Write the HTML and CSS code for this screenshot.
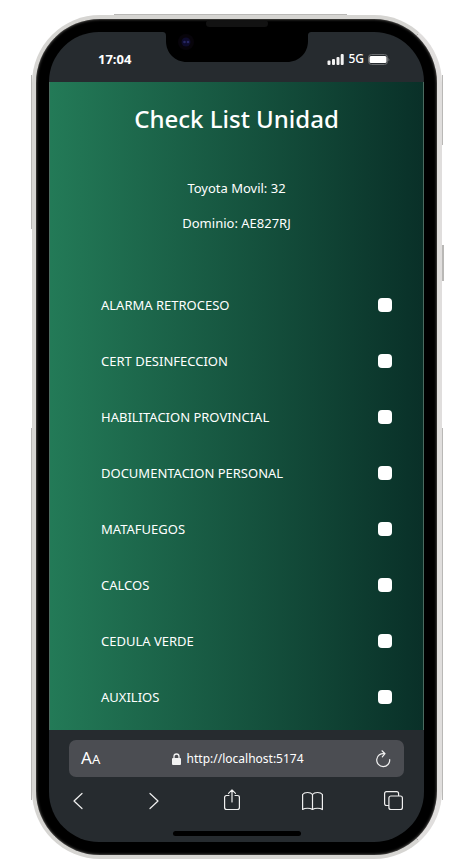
FILE: index.html
```html
<!DOCTYPE html>
<html lang="es">
<head>
<meta charset="utf-8">
<meta name="viewport" content="width=device-width, initial-scale=1">
<title>Check List Unidad</title>
<link rel="stylesheet" href="styles.css">
</head>
<body>
<div class="phone">
  <span class="edge edge-top"></span>
  <span class="edge edge-left-upper"></span>
  <span class="edge edge-left-lower"></span>
  <span class="edge edge-right-upper"></span>
  <span class="edge edge-power"></span>
  <span class="edge edge-right-lower"></span>
  <span class="speaker"></span>
  <div class="screen">
    <svg class="notch" width="150" height="30" viewBox="0 0 150 30" aria-hidden="true">
      <path d="M0 0C3 0 4 1 4 4V9C4 21 13 30 25 30H125C137 30 146 21 146 9V4C146 1 147 0 150 0Z" fill="#000"/>
      <circle cx="24" cy="10" r="8" fill="#07040a"/>
      <circle cx="24" cy="10" r="4.500" fill="#0d0b2c"/>
      <circle cx="22.500" cy="10" r="1.300" fill="#272763"/>
      <circle cx="26" cy="10" r="1.300" fill="#272763"/>
    </svg>
    <header class="status">
      <span class="time">17:04</span>
      <span class="signals">
        <svg width="17" height="11" viewBox="0 0 17 11" fill="#f2f2f2" aria-hidden="true">
          <rect x="0.500" y="6.500" width="3" height="4.500" rx="1"/><rect x="5" y="5" width="3" height="6" rx="1"/><rect x="9.500" y="3" width="3" height="8" rx="1"/><rect x="13.700" y="0" width="3" height="11" rx="1"/>
        </svg>
        <span class="network">5G</span>
        <svg width="22" height="11" viewBox="0 0 22 11" aria-hidden="true">
          <rect x=".5" y=".5" width="19" height="10" rx="3" fill="none" stroke="#6b6e71"/>
          <rect x="1.500" y="2" width="17" height="7" rx="1.500" fill="#fff"/>
          <path d="M20.500 3.500Q22 5.500 20.500 7.500Z" fill="#7b7e80"/>
        </svg>
      </span>
    </header>
    <main class="page">
      <h1 class="title">Check List Unidad</h1>
      <div class="unit">
        <p>Toyota Movil: 32</p>
        <p>Dominio: AE827RJ</p>
      </div>
      <form class="checks">
        <div class="check"><label for="c1">ALARMA RETROCESO</label><input type="checkbox" id="c1"></div>
        <div class="check"><label for="c2">CERT DESINFECCION</label><input type="checkbox" id="c2"></div>
        <div class="check"><label for="c3">HABILITACION PROVINCIAL</label><input type="checkbox" id="c3"></div>
        <div class="check"><label for="c4">DOCUMENTACION PERSONAL</label><input type="checkbox" id="c4"></div>
        <div class="check"><label for="c5">MATAFUEGOS</label><input type="checkbox" id="c5"></div>
        <div class="check"><label for="c6">CALCOS</label><input type="checkbox" id="c6"></div>
        <div class="check"><label for="c7">CEDULA VERDE</label><input type="checkbox" id="c7"></div>
        <div class="check"><label for="c8">AUXILIOS</label><input type="checkbox" id="c8"></div>
      </form>
    </main>
    <footer class="browser">
      <div class="address">
        <button class="text-size" type="button" aria-label="Tamaño de texto"><span class="big">A</span><span class="small">A</span></button>
        <a class="url" href="http://localhost:5174">
          <svg width="9" height="12" viewBox="0 0 9 12" aria-hidden="true"><rect x="0" y="5" width="9" height="7" rx="1" fill="#f2f2f2"/><path d="M2 6V3.500a2.500 2.500 0 0 1 5 0V6" fill="none" stroke="#f2f2f2" stroke-width="1.300"/></svg>
          <span>http://localhost:5174</span>
        </a>
        <button type="button" aria-label="Recargar">
          <svg class="line" width="16" height="18" viewBox="0 0 16 18"><path d="M9.500 3.700A6.500 6.500 0 1 0 14.700 9.500M7 .8l3 2.900L7.300 6.800"/></svg>
        </button>
      </div>
      <nav class="tools" aria-label="Navegador">
        <button type="button" aria-label="Atrás"><svg class="line" width="14" height="22" viewBox="0 0 14 22"><path d="M9 4.500L1 12l8 7.500"/></svg></button>
        <button type="button" aria-label="Adelante"><svg class="line" width="14" height="22" viewBox="0 0 14 22"><path d="M1 4.500L9 12l-8 7.500"/></svg></button>
        <button type="button" aria-label="Compartir"><svg class="line" width="16" height="22" viewBox="0 0 16 22"><path d="M5 6.500H2.500Q.6 6.500.6 8.500v10q0 2 2 2h10.800q2 0 2-2v-10q0-2-2-2H11M8 13V1M4.500 4.300L8 .8l3.500 3.500"/></svg></button>
        <button type="button" aria-label="Marcadores"><svg class="line" width="21" height="22" viewBox="0 0 21 22"><path d="M10.500 5.500C8.500 2.800 2.500 2.800.6 5.500V20.500C3 18.800 8 18.800 10.500 20.500 13 18.800 18 18.800 20.400 20.500V5.500C18.500 2.800 12.500 2.800 10.500 5.500V20.500"/></svg></button>
        <button type="button" aria-label="Pestañas"><svg class="line" width="19" height="22" viewBox="0 0 19 22"><rect x="4.900" y="7" width="13.500" height="13.500" rx="2"/><path d="M4.500 16.500H2.600Q.6 16.500.6 14.500V4.700Q.6 2.700 2.600 2.700h10q2 0 2 2V6.500"/></svg></button>
      </nav>
      <span class="home"></span>
    </footer>
  </div>
</div>
</body>
</html>
```
FILE: styles.css
```css
* { box-sizing: border-box; }

body {
  margin: 0;
  padding: 15px 18px 8px 32px;
  background: #fff;
  color: #fff;
  font: 14px/20px "Segoe UI", "Noto Sans", "Open Sans", sans-serif;
}

button {
  display: flex;
  align-items: center;
  padding: 0;
  border: 0;
  background: none;
  color: inherit;
  font: inherit;
}

.phone {
  position: relative;
  padding: 13px;
  border: 4px solid #d6d5d2;
  border-right: 5px solid #e0dedd;
  border-radius: 68px;
  background: #000;
  box-shadow: inset 0 0 3px #8a8884;
}

.edge { position: absolute; background: #b9b8b6; }
.edge-top { top: -5px; left: 78px; right: 90px; height: 1px; }
.edge-left-upper { left: -5px; top: 56px; width: 1px; height: 154px; }
.edge-left-lower { left: -5px; top: 409px; width: 1px; height: 372px; }
.edge-right-upper { right: -6px; top: 56px; width: 1px; height: 70px; }
.edge-power { right: -7px; top: 226px; width: 2px; height: 36px; }
.edge-right-lower { right: -6px; top: 409px; width: 1px; height: 372px; }

.speaker {
  position: absolute;
  top: 1px;
  left: 50%;
  width: 62px;
  height: 7px;
  border-radius: 4px;
  background: #121212;
  transform: translateX(-50%);
}

.screen {
  position: relative;
  overflow: hidden;
  border-radius: 50px;
  background: #262b2f;
}

.notch {
  position: absolute;
  top: 0;
  left: 50%;
  transform: translateX(-50%);
}

.status {
  display: flex;
  align-items: center;
  justify-content: space-between;
  height: 50px;
  padding: 4px 34px 0 49px;
}

.time { font-size: 13px; font-weight: 700; }

.signals { display: flex; align-items: center; gap: 4px; }
.network { font-size: 12px; font-weight: 500; }

.page {
  padding: 19px 0 5px;
  border: solid #4b6b60;
  border-width: 0 1px 0 1px;
  background: linear-gradient(to right, #237a57, #093028);
}

.title {
  margin: 0;
  font-size: 24px;
  font-weight: 500;
  line-height: 36px;
  text-align: center;
}

.unit {
  display: grid;
  gap: 15px;
  padding: 41px 0 44px;
  font-size: 13px;
  text-align: center;
}

.unit p { margin: 0; }

.check {
  display: flex;
  align-items: center;
  justify-content: space-between;
  height: 56px;
  padding: 0 31px 0 51px;
  font-size: 13px;
}

.check input {
  width: 14px;
  height: 14px;
  margin: 0;
  border-radius: 4px;
  background: #fff;
  appearance: none;
}

.check input:checked { background: #0d6efd; }

.browser { padding: 10px 20px 6px; }

.address {
  display: flex;
  align-items: center;
  justify-content: space-between;
  height: 37px;
  padding: 0 13px 0 12px;
  border-radius: 7px;
  background: #4b4d52;
}

.text-size { align-items: baseline; }
.big { font-size: 17px; }
.small { font-size: 13px; }

.url {
  display: flex;
  align-items: center;
  gap: 6px;
  color: inherit;
  font-size: 12px;
  text-decoration: none;
}

.line {
  display: block;
  fill: none;
  stroke: #f0f0f0;
  stroke-width: 1.2px;
  stroke-linecap: round;
  stroke-linejoin: round;
}

.tools {
  display: flex;
  justify-content: space-between;
  padding: 12px 1px 20px 4px;
}

.home {
  display: block;
  width: 128px;
  height: 5px;
  margin: 0 auto;
  border-radius: 3px;
  background: #000;
}
```
